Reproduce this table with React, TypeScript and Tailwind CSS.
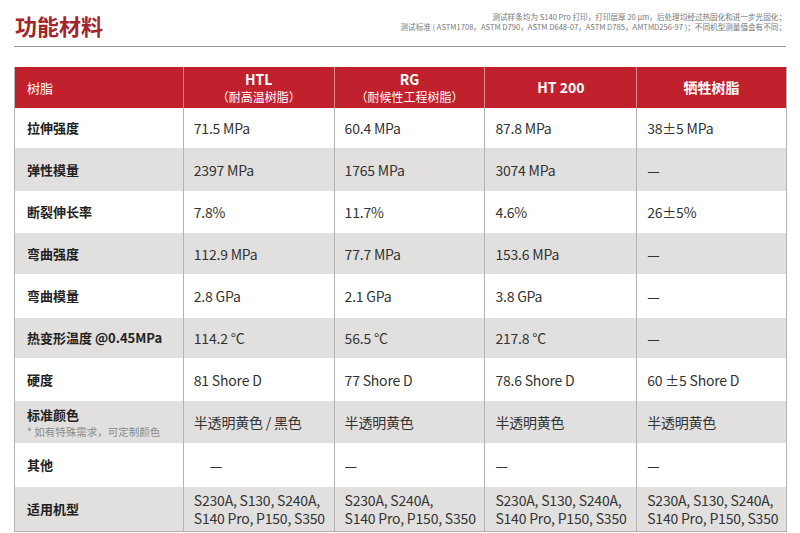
const font = { fontFamily: '"Noto Sans CJK SC", "Noto Sans", sans-serif' };

type Row = {
  label: string;
  sub?: string;
  values: string[];
  gray: boolean;
  h: string;
  indentFirst?: boolean;
};

const rows: Row[] = [
  { label: "拉伸强度", values: ["71.5 MPa", "60.4 MPa", "87.8 MPa", "38±5 MPa"], gray: false, h: "h-[40px]" },
  { label: "弹性模量", values: ["2397 MPa", "1765 MPa", "3074 MPa", "—"], gray: true, h: "h-[43px]" },
  { label: "断裂伸长率", values: ["7.8%", "11.7%", "4.6%", "26±5%"], gray: false, h: "h-[42px]" },
  { label: "弯曲强度", values: ["112.9 MPa", "77.7 MPa", "153.6 MPa", "—"], gray: true, h: "h-[41px]" },
  { label: "弯曲模量", values: ["2.8 GPa", "2.1 GPa", "3.8 GPa", "—"], gray: false, h: "h-[44px]" },
  { label: "热变形温度 @0.45MPa", values: ["114.2 °C", "56.5 °C", "217.8 °C", "—"], gray: true, h: "h-[40px]" },
  { label: "硬度", values: ["81 Shore D", "77 Shore D", "78.6 Shore D", "60 ±5 Shore D"], gray: false, h: "h-[43px]" },
  {
    label: "标准颜色",
    sub: "* 如有特殊需求，可定制颜色",
    values: ["半透明黄色 / 黑色", "半透明黄色", "半透明黄色", "半透明黄色"],
    gray: true,
    h: "h-[42px]",
  },
  { label: "其他", values: ["—", "—", "—", "—"], gray: false, h: "h-[44px]", indentFirst: true },
  {
    label: "适用机型",
    values: [
      "S230A, S130, S240A,\nS140 Pro, P150, S350",
      "S230A, S240A,\nS140 Pro, P150, S350",
      "S230A, S130, S240A,\nS140 Pro, P150, S350",
      "S230A, S130, S240A,\nS140 Pro, P150, S350",
    ],
    gray: true,
    h: "h-[44px]",
  },
];

const cols = ["w-[168px]", "w-[151px]", "w-[151px]", "w-[152px]", "w-[150px]"];

function HeaderRow() {
  return (
    <div className="flex h-[41px] bg-[#c1202d] text-white">
      <div className={`${cols[0]} flex items-center pl-[12px] text-[13px]`}>树脂</div>
      <div className={`${cols[1]} flex flex-col items-center justify-center border-l border-[#d9898f] leading-[17px]`}>
        <span className="text-[14px] font-bold">HTL</span>
        <span className="text-[12px]">（耐高温树脂）</span>
      </div>
      <div className={`${cols[2]} flex flex-col items-center justify-center border-l border-[#d9898f] leading-[17px]`}>
        <span className="text-[14px] font-bold">RG</span>
        <span className="text-[12px]">（耐候性工程树脂）</span>
      </div>
      <div className={`${cols[3]} flex items-center justify-center border-l border-[#d9898f] text-[14px] font-bold`}>
        HT 200
      </div>
      <div className={`${cols[4]} flex items-center justify-center border-l border-[#d9898f] text-[14px] font-bold`}>
        牺牲树脂
      </div>
    </div>
  );
}

function BodyRow({ row }: { row: Row }) {
  return (
    <div className={`flex ${row.h} ${row.gray ? "bg-[#e1e0de]" : "bg-white"}`}>
      <div className={`${cols[0]} flex flex-col justify-center pl-[12px]`}>
        <span className="text-[13px] font-semibold leading-[18px] text-[#222]">{row.label}</span>
        {row.sub && <span className="text-[10.5px] leading-[15px] text-[#8a8a8a]">{row.sub}</span>}
      </div>
      {row.values.map((v, i) => (
        <div
          key={i}
          className={`${cols[i + 1]} flex items-center border-l border-[#b4b4b4] ${
            row.indentFirst && i === 0 ? "pl-[26px]" : "pl-[10px]"
          }`}
        >
          <span className="whitespace-pre text-[14px] leading-[18px] tracking-[-0.2px] text-[#333]">{v}</span>
        </div>
      ))}
    </div>
  );
}

export default function App() {
  return (
    <div className="h-[533px] w-[800px] overflow-hidden bg-white" style={font}>
      <div className="mx-[14px] flex h-[47px] items-start justify-between border-b-[1.5px] border-[#9b9b9b] pt-[11px]">
        <h1 className="pl-[1px] text-[22px] font-bold leading-[28px] text-[#a3252c]">功能材料</h1>
        <div className="pt-[1px] text-right text-[7.6px] leading-[10px] text-[#777]">
          <p>测试样条均为 S140 Pro 打印，打印层厚 20 µm，后处理均经过热固化和进一步光固化；</p>
          <p>测试标准 ( ASTM1708，ASTM D790，ASTM D648-07，ASTM D785，AMTMD256-97 )；不同机型测量值会有不同；</p>
        </div>
      </div>
      <div className="mx-[14px] mt-[20px] w-[773px] border border-t-0 border-[#b4b4b4]">
        <HeaderRow />
        {rows.map((r) => (
          <BodyRow key={r.label} row={r} />
        ))}
      </div>
    </div>
  );
}
